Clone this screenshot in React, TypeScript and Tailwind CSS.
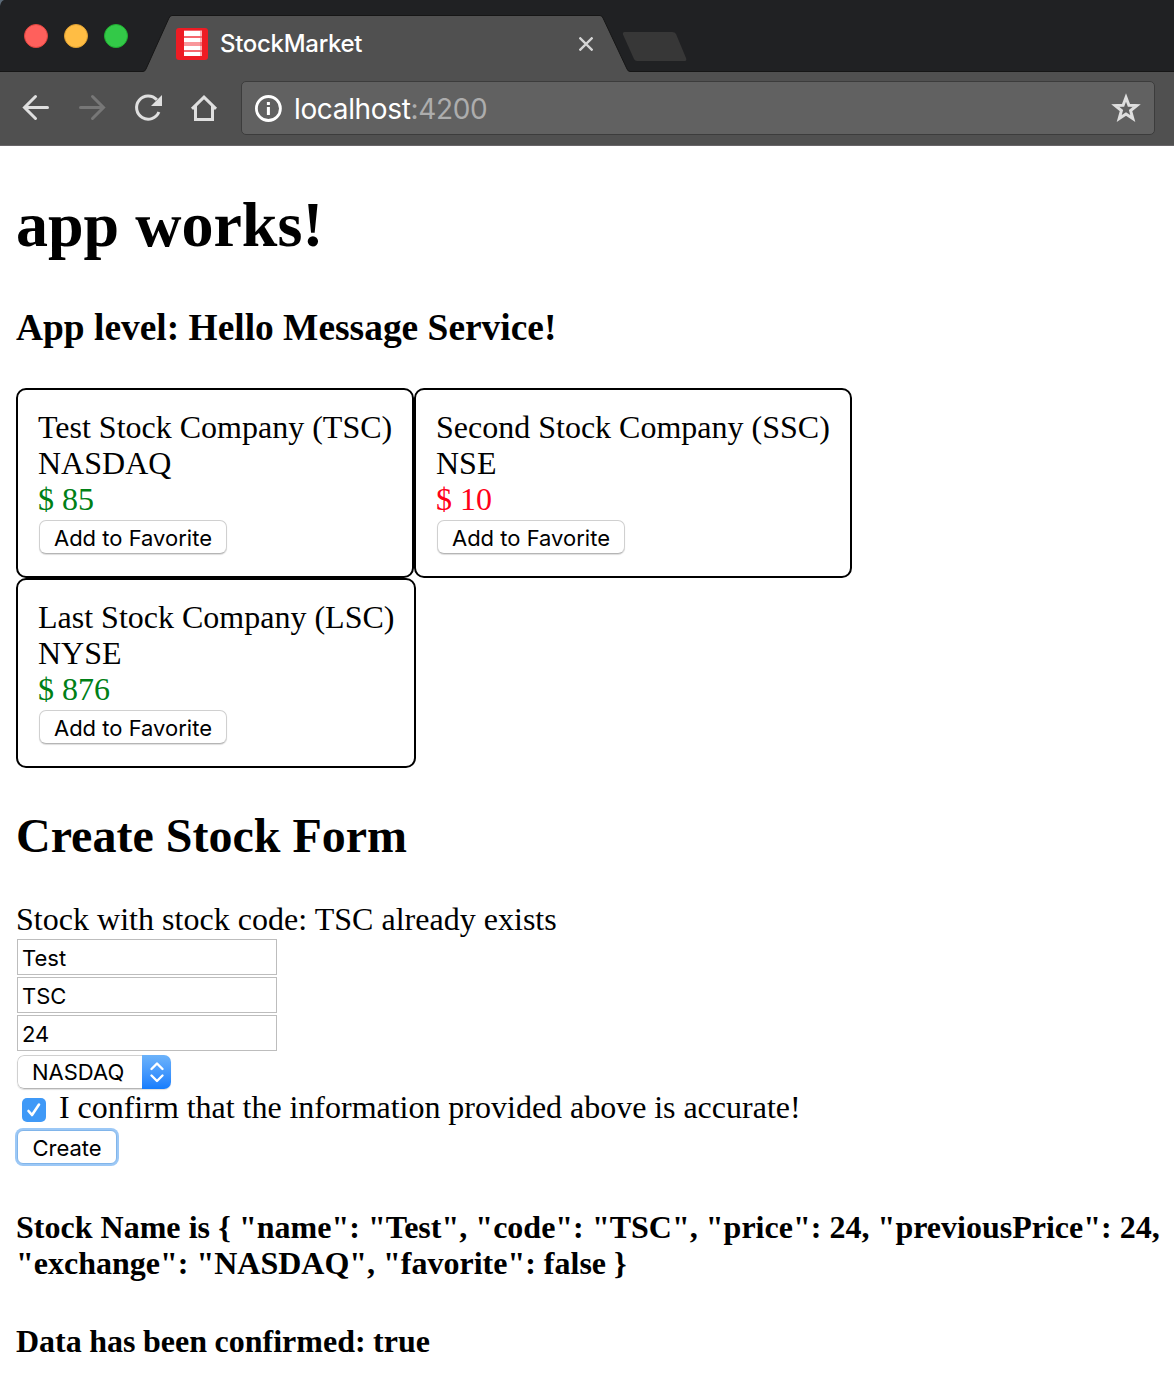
import React from "react";

const stocks = [
  { name: "Test Stock Company (TSC)", exchange: "NASDAQ", price: 85, up: true, width: "w-[398px]" },
  { name: "Second Stock Company (SSC)", exchange: "NSE", price: 10, up: false, width: "w-[438px]" },
  { name: "Last Stock Company (LSC)", exchange: "NYSE", price: 876, up: true, width: "w-[400px]" },
];

function TabStrip() {
  return (
    <div className="relative flex h-[72px] items-start bg-[#202123]">
      <svg className="absolute left-0 top-0" width="1174" height="72" viewBox="0 0 1174 72">
        <path d="M0 0H4Q1 1 0 6Z" fill="#5c6b78" />
        <path d="M0 71.5H143Q145 71.5 146 69L169 18Q170.200 15.500 172 15.500H600Q602 15.500 603 18L627 69Q628 71.500 630 71.500H1174V73H0Z" fill="#505050" stroke="#161616" />
        <path d="M624.500 32H672Q675 32 676 34L686 58Q687 61 685 61H637Q635 61 634 59L623 34.500Q622.500 32 624.500 32Z" fill="#373737" />
      </svg>
      <div className="relative ml-6 mt-6 flex gap-4">
        <span className="size-6 rounded-full border border-[#e0443e] bg-[#ff605c]" />
        <span className="size-6 rounded-full border border-[#dea031] bg-[#ffbd44]" />
        <span className="size-6 rounded-full border border-[#1fae30] bg-[#33c948]" />
      </div>
      <div className="relative ml-12 mt-7 flex h-8 w-[420px] items-center">
        <svg width="32" height="32" viewBox="0 0 32 32">
          <rect width="32" height="32" rx="3" fill="#ed1c24" />
          <rect x="8" y="2" width="18" height="26" fill="#f4686e" />
          <rect x="8" y="14" width="16" height="4" fill="#f9979b" />
          <path d="M8 3H24V8H8ZM8 10H24V14H8ZM8 18H24V22H8ZM8 24H24V28H8Z" fill="#fff" />
          <path d="M24 3H26V8H24ZM24 10H26V14H24ZM24 18H26V22H24ZM24 24H26V28H24Z" fill="#fbb5b8" />
        </svg>
        <span className="ml-3 whitespace-nowrap font-['Inter'] text-[24px] leading-8 font-medium tracking-[-0.3px] text-white">StockMarket</span>
        <svg className="ml-auto mr-[3px]" width="14" height="14" viewBox="0 0 14 14" fill="none" stroke="#d6d6d6" strokeWidth="2.300">
          <path d="M0.500 0.500L13.500 13.500M13.500 0.500L0.500 13.500" />
        </svg>
      </div>
    </div>
  );
}

function Toolbar() {
  return (
    <div className="flex h-[74px] items-start border-b border-[#686568] bg-[#505050] pl-5 pt-[9px]">
      <div className="mt-3 flex gap-6">
        <svg width="32" height="32" viewBox="20 93 32 32" fill="none" stroke="#dfdfdf" strokeWidth="3" strokeLinecap="round">
          <path d="M47.500 107.500H25M35.500 96.500L24.500 107.500L35.500 118.500" />
        </svg>
        <svg width="32" height="32" viewBox="76 93 32 32" fill="none" stroke="#777" strokeWidth="3" strokeLinecap="round">
          <path d="M80.500 107.500H103M92.500 96.500L103.500 107.500L92.500 118.500" />
        </svg>
        <svg width="32" height="32" viewBox="132 93 32 32" fill="none" stroke="#dfdfdf" strokeWidth="3">
          <path d="M156.800 99.800A11.600 11.600 0 1 0 158.900 112" />
          <path d="M162 95V106H151Z" fill="#dfdfdf" stroke="none" />
        </svg>
        <svg width="32" height="32" viewBox="188 93 32 32" fill="none" stroke="#dfdfdf" strokeWidth="3">
          <path d="M192 108.800L204 97.200L216 108.800M195.500 106V119.500H212.500V106" />
        </svg>
      </div>
      <div className="ml-[21px] flex h-[54px] w-[914px] items-center rounded-[5px] border border-[#3c3c3c] bg-[#616161] pl-3 pr-3">
        <svg width="28" height="28" viewBox="0 0 28 28" fill="none" stroke="#fff" strokeWidth="2.800">
          <circle cx="14.400" cy="14.500" r="12" />
          <path d="M14.400 13V21M14.400 8V11" strokeWidth="3" />
        </svg>
        <span className="ml-3 mt-[2px] whitespace-nowrap font-['Inter'] text-[28px] leading-[34px] tracking-[-0.35px] text-white">
          localhost<span className="text-[#adadad]">:4200</span>
        </span>
        <svg className="ml-auto" width="32" height="32" viewBox="1110 92 32 32" fill="none" stroke="#dfdfdf" strokeWidth="3">
          <path d="M1126 97.500L1128.900 105.200L1136.800 105.500L1130.600 110.600L1132.800 118.500L1126 114.100L1119.200 118.500L1121.400 110.600L1115.200 105.500L1123.100 105.200Z" />
        </svg>
      </div>
    </div>
  );
}

function StockCard({ stock }: { stock: (typeof stocks)[number] }) {
  return (
    <article className={`h-[190px] rounded-[10px] border-2 border-black px-5 pt-[19px] ${stock.width}`}>
      <div className="whitespace-nowrap">{stock.name}</div>
      <div>{stock.exchange}</div>
      <div className={stock.up ? "text-[#008016]" : "text-[#ff0019]"}>$ {stock.price}</div>
      <button className="ml-px mt-[3px] flex h-[34px] w-[188px] items-center justify-center whitespace-nowrap rounded-[7px] border border-[#d0d0d0] border-b-[#b5b5b5] bg-white pt-[2px] font-['Inter'] text-[22px] shadow-[0_1px_1px_#0002]">
        Add to Favorite
      </button>
    </article>
  );
}

function StockForm() {
  return (
    <form className="flex flex-col items-start">
      <div className="[word-spacing:0.15px]">Stock with stock code: TSC already exists</div>
      <div className="ml-px mt-[2px] flex flex-col gap-[2px]">
        {["Test", "TSC", "24"].map((value) => (
          <input key={value} defaultValue={value} className="block h-9 w-[260px] border border-[#bdbdbd] bg-white px-1 pt-[2px] font-['Inter'] text-[22px] leading-8 outline-none" />
        ))}
      </div>
      <div className="ml-px mt-1 flex h-[34px] w-[154px] overflow-hidden rounded-[7px] font-['Inter'] text-[22px] shadow-[0_1px_1px_#0002]">
        <span className="flex w-[125px] items-center rounded-l-[7px] border border-r-0 border-[#d0d0d0] border-b-[#b5b5b5] pl-[14px]">NASDAQ</span>
        <span className="flex w-[29px] items-center justify-center bg-linear-to-b from-[#6cb3fa] to-[#147dfd]">
          <svg width="16" height="22" viewBox="0 0 16 22" fill="none" stroke="#fff" strokeWidth="2.400" strokeLinecap="round" strokeLinejoin="round">
            <path d="M2.500 8L8 2.500L13.500 8M2.500 14.500L8 20L13.500 14.500" />
          </svg>
        </span>
      </div>
      <label className="flex h-9 items-start">
        <span className="ml-[6px] mt-[9px] flex size-6 items-center justify-center rounded-[5px] bg-[#3f99f7]">
          <svg width="18" height="18" viewBox="0 0 18 18" fill="none" stroke="#fff" strokeWidth="2.600" strokeLinecap="round" strokeLinejoin="round">
            <path d="M3.500 10L7 14L14 3.500" />
          </svg>
        </span>
        <span className="ml-[13px] whitespace-nowrap [word-spacing:-0.15px]">I confirm that the information provided above is accurate!</span>
      </label>
      <button type="button" className="ml-px mt-[5px] flex h-[34px] w-[100px] items-center justify-center rounded-[6px] border border-[#81b5ea] bg-white pt-[2px] font-['Inter'] text-[22px] shadow-[0_0_0_2px_#9cc8f6]">
        Create
      </button>
    </form>
  );
}

export default function App() {
  return (
    <div className="h-[1396px] w-[1174px] overflow-hidden bg-white">
      <TabStrip />
      <Toolbar />
      <main className="px-4 pt-[43px] font-['Liberation_Serif'] text-[32px] leading-9 text-black">
        <h1 className="text-[64px] leading-[72px] font-bold">app works!</h1>
        <h3 className="mt-[46px] text-[37.44px] leading-[42px] font-bold">App level: Hello Message Service!</h3>
        <section className="mt-[39px] flex flex-wrap">
          {stocks.map((stock) => (
            <StockCard key={stock.name} stock={stock} />
          ))}
        </section>
        <h2 className="mb-[38px] mt-[41px] text-[48px] leading-[54px] font-bold">Create Stock Form</h2>
        <StockForm />
        <h4 className="mt-[45px] font-bold">
          <span className="block whitespace-nowrap [word-spacing:0.15px]">{'Stock Name is { "name": "Test", "code": "TSC", "price": 24, "previousPrice": 24,'}</span>
          <span className="block whitespace-nowrap">{'"exchange": "NASDAQ", "favorite": false }'}</span>
        </h4>
        <h4 className="mt-[42px] font-bold [word-spacing:-0.5px]">Data has been confirmed: true</h4>
      </main>
    </div>
  );
}
